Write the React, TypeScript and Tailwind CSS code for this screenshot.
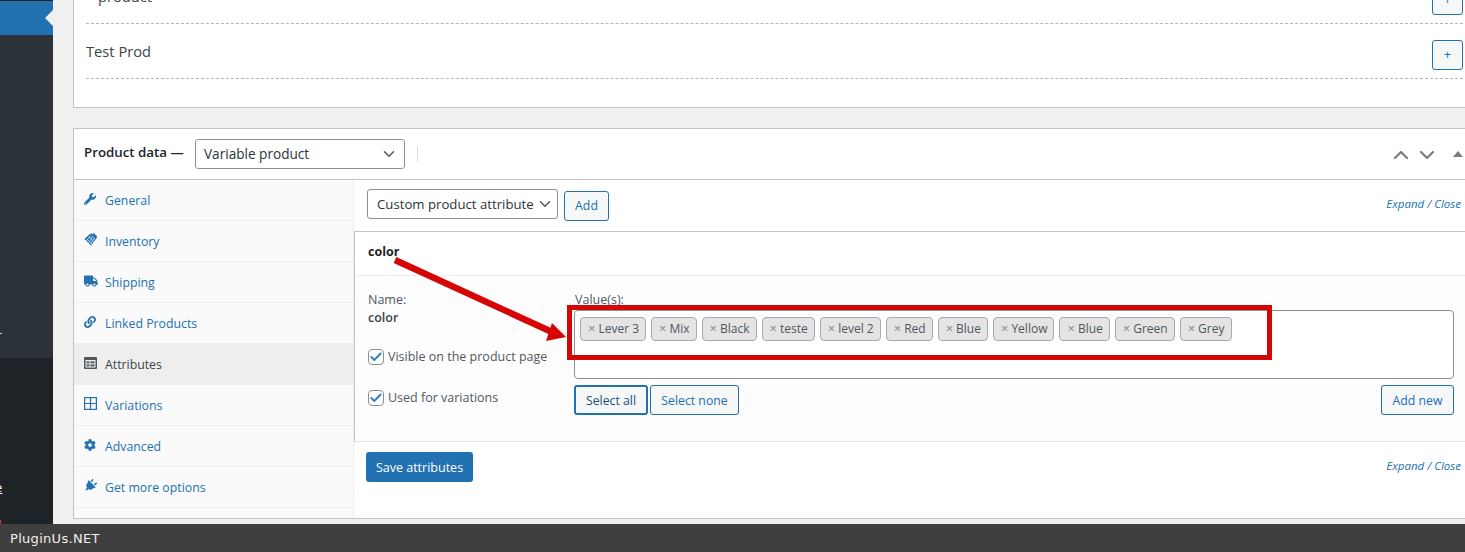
import React from "react";
import { FaWrench, FaTruck, FaLink, FaCog, FaPlug } from "react-icons/fa";
import { ChevronDown, ChevronUp, Check } from "lucide-react";

const InventoryIcon = () => (
  <svg width="14" height="14" viewBox="0 0 14 14" fill="#2271b1">
    <path d="M0.5 6 L6.5 0.5 L9 1 L9.5 0 L13 3 L12.5 5.5 L7 12.5 Z" />
    <path d="M3 6 L8 11 M5 4 L10 9 M7 2.5 L11.5 7 M6 3 L2.5 8 M8.5 4 L4.5 10 M10.5 5 L6.5 11" stroke="#fafafa" strokeWidth="0.6" fill="none" />
  </svg>
);
const AttrIcon = () => (
  <svg width="13" height="12" viewBox="0 0 13 12">
    <rect width="13" height="12" rx="1" fill="#50575e" />
    <rect x="1.5" y="3" width="10" height="7.5" fill="#eee" />
    <rect x="2.5" y="4.3" width="3" height="2" fill="#50575e" />
    <rect x="2.5" y="7.4" width="3" height="2" fill="#50575e" />
    <rect x="6.5" y="4.3" width="4" height="2" fill="#50575e" />
    <rect x="6.5" y="7.4" width="4" height="2" fill="#50575e" />
  </svg>
);
const GridIcon = () => (
  <svg width="13" height="13" viewBox="0 0 13 13" fill="none" stroke="#2271b1" strokeWidth="1.2">
    <rect x="0.6" y="0.6" width="11.8" height="11.8" />
    <path d="M6.5 0.6V12.4M0.6 6.5H12.4" />
  </svg>
);

const tabs: { label: string; icon: React.ReactNode; active?: boolean }[] = [
  { label: "General", icon: <FaWrench size={12} color="#2271b1" /> },
  { label: "Inventory", icon: <InventoryIcon /> },
  { label: "Shipping", icon: <FaTruck size={14} color="#2271b1" /> },
  { label: "Linked Products", icon: <FaLink size={12} color="#2271b1" /> },
  { label: "Attributes", icon: <AttrIcon />, active: true },
  { label: "Variations", icon: <GridIcon /> },
  { label: "Advanced", icon: <FaCog size={12} color="#2271b1" /> },
  { label: "Get more options", icon: <FaPlug size={13} color="#2271b1" className="rotate-45" /> },
];

const values = ["Lever 3", "Mix", "Black", "teste", "level 2", "Red", "Blue", "Yellow", "Blue", "Green", "Grey"];

const PlusButton = () => (
  <div className="w-[31px] h-[30px] mt-[7px] shrink-0 border border-[#2271b1] rounded-[3px] bg-[#f6f7f7] flex items-center justify-center text-[13px] text-[#2271b1]">
    +
  </div>
);

const Checkbox = () => (
  <span className="w-4 h-4 shrink-0 border border-[#8c8f94] rounded-[4px] bg-white flex items-center justify-center">
    <Check size={14} strokeWidth={3.5} color="#3582c4" />
  </span>
);

const OutlineButton = ({ children, className = "" }: { children: React.ReactNode; className?: string }) => (
  <div className={"h-[30px] pt-[2px] flex items-center justify-center rounded-[3px] bg-[#f6f7f7] text-[12.3px] " + className}>
    {children}
  </div>
);

const ExpandClose = () => (
  <span className="text-[11.5px] italic text-[#2271b1]">Expand / Close</span>
);

export default function App() {
  return (
    <div className="relative w-[1465px] h-[552px] overflow-hidden flex flex-col bg-[#f0f0f1] font-['Open_Sans','Noto_Sans',sans-serif] text-[13px] text-[#3c434a]">
      <div className="flex-1 flex min-h-0">
        {/* Admin sidebar */}
        <aside className="relative w-[53px] shrink-0 flex flex-col bg-[#2c3338]">
          <div className="relative h-[35px] bg-[#2271b1] border-t border-[#1d2327]">
            <span className="absolute right-0 top-[9px] w-0 h-0 border-y-[8px] border-y-transparent border-r-[8px] border-r-[#f0f0f1]" />
          </div>
          <div className="flex-1" />
          <div className="h-[166px] bg-[#1d2327]" />
          <span className="absolute left-0 top-[333px] w-[2px] h-px bg-[#ccc]" />
          <span className="absolute left-[-5px] top-[478px] text-[13px] text-white underline">e</span>
          <span className="absolute left-0 bottom-0 w-px h-[4px] bg-[#d63638]" />
        </aside>

        {/* Content */}
        <main className="flex-1 min-w-0 pl-5 flex flex-col">
          <section className="h-[108px] shrink-0 mr-[-1px] bg-white border-x border-b border-[#c3c4c7] overflow-hidden pl-3 pr-[2px]">
            <div className="-mt-[31px]">
              <div className="h-[55px] flex items-center justify-between border-b border-dashed border-[#b5b5b5]">
                <span className="pl-3 text-[14.7px] text-[#3c434a]">product</span>
                <PlusButton />
              </div>
              <div className="h-[55px] flex items-center justify-between border-b border-dashed border-[#b5b5b5]">
                <span className="text-[14.7px] text-[#3c434a]">Test Prod</span>
                <PlusButton />
              </div>
            </div>
          </section>

          <section className="mt-5 h-[391px] shrink-0 mr-[-1px] bg-white border-x border-y border-[#c3c4c7] flex flex-col">
            <header className="h-[51px] shrink-0 flex items-center border-b border-[#c3c4c7] pl-[10px] pr-[2px]">
              <span className="font-semibold text-[13.3px] text-[#1d2327] w-[111px] -mt-[2px] whitespace-nowrap">Product data —</span>
              <div className="w-[210px] h-[30px] flex items-center justify-between border border-[#8c8f94] rounded-[3px] pl-2 pr-[6px] text-[13.6px] text-[#2c3338]">
                <span className="pt-px">Variable product</span>
                <ChevronDown size={18} strokeWidth={2} color="#50575e" />
              </div>
              <span className="ml-3 w-px h-4 bg-[#ddd]" />
              <div className="flex-1" />
              <ChevronUp size={24} strokeWidth={2.2} color="#787c82" className="mt-px" />
              <ChevronDown size={24} strokeWidth={2.2} color="#787c82" className="ml-[2px] mt-px" />
              <span className="ml-[14px] w-0 h-0 border-x-[5px] border-x-transparent border-b-[6px] border-b-[#787c82]" />
            </header>

            <div className="flex-1 flex min-h-0">
              <nav className="w-[280px] shrink-0 bg-[#fafafa] border-r border-[#eee] flex flex-col">
                {tabs.map((t) => (
                  <div
                    key={t.label}
                    className={
                      "h-[41px] shrink-0 flex items-center pl-[10px] border-b border-[#eee] " +
                      (t.active ? "bg-[#eee] text-[#3c434a]" : "text-[#2271b1]")
                    }
                  >
                    <span className="w-[21px] flex items-center -mt-[3px]">{t.icon}</span>
                    <span className="text-[12.3px] pt-[2px]">{t.label}</span>
                  </div>
                ))}
              </nav>

              <div className="flex-1 min-w-0 flex flex-col">
                <div className="h-[52px] shrink-0 flex items-center pl-[13px] pr-[4px] border-b border-[#c3c4c7]">
                  <div className="w-[191px] h-[30px] flex items-center justify-between border border-[#8c8f94] rounded-[3px] pl-[9px] pr-[3px] -mt-[3px] text-[13.2px] text-[#2c3338] whitespace-nowrap">
                    <span className="pt-[2px]">Custom product attribute</span>
                    <ChevronDown size={18} strokeWidth={2} color="#50575e" />
                  </div>
                  <OutlineButton className="ml-[6px] w-[45px] border border-[#2271b1] text-[#2271b1]">Add</OutlineButton>
                  <div className="flex-1" />
                  <span className="-mt-[3px]"><ExpandClose /></span>
                </div>

                <div className="border-l border-[#c3c4c7] h-[210px] shrink-0 flex flex-col border-b border-b-[#e5e5e5]">
                  <div className="h-[44px] pb-[2px] shrink-0 flex items-center pl-[13px] border-b border-[#eee] font-bold text-[12.5px] text-[#1d2327]">
                    color
                  </div>
                  <div className="flex-1 flex bg-[#fdfdfd] pl-[13px] pr-[11px] pt-[15px]">
                    <div className="w-[206px] shrink-0 flex flex-col text-[12.5px] text-[#50575e]">
                      <span className="leading-[18px]">Name:</span>
                      <span className="leading-[18px] font-semibold text-[#3c434a]">color</span>
                      <label className="mt-[21px] flex items-center gap-1 whitespace-nowrap">
                        <Checkbox />
                        Visible on the product page
                      </label>
                      <label className="mt-[22px] flex items-center gap-1 whitespace-nowrap">
                        <Checkbox />
                        Used for variations
                      </label>
                    </div>
                    <div className="flex-1 min-w-0 flex flex-col">
                      <span className="leading-[18px] pl-px text-[12.5px] text-[#50575e]">Value(s):</span>
                      <div className="h-[69px] mt-px border border-[#8c8f94] rounded-[4px] bg-white pl-[5px] pt-[6px] flex gap-[5px] items-start">
                        {values.map((v, i) => (
                          <span
                            key={i}
                            className="h-[24px] flex items-center gap-[3px] pl-[7px] pr-[6px] bg-[#e4e4e4] border border-[#aaa] rounded-[4px] text-[12px] text-[#50575e] whitespace-nowrap"
                          >
                            <span className="text-[#888] text-[13px]">×</span>
                            {v}
                          </span>
                        ))}
                      </div>
                      <div className="mt-[6px] flex items-center">
                        <OutlineButton className="w-[74px] border-2 border-[#2271b1] text-[#1d4f7a]">Select all</OutlineButton>
                        <OutlineButton className="ml-[2px] w-[89px] border border-[#2271b1] text-[#2271b1]">Select none</OutlineButton>
                        <div className="flex-1" />
                        <OutlineButton className="w-[73px] border border-[#2271b1] text-[#2271b1]">Add new</OutlineButton>
                      </div>
                    </div>
                  </div>
                </div>

                <div className="h-[41px] mt-[10px] shrink-0 flex items-start pl-[12px] pr-[4px]">
                  <div className="w-[107px] h-[30px] pt-[2px] flex items-center justify-center rounded-[3px] bg-[#2271b1] text-white text-[12.5px] font-medium">
                    Save attributes
                  </div>
                  <div className="flex-1" />
                  <span className="mt-[4px]"><ExpandClose /></span>
                </div>
              </div>
            </div>
          </section>
        </main>
      </div>

      <footer className="h-[28px] shrink-0 bg-[#3f3f3f] flex items-center pl-[10px] pt-px font-['DejaVu_Sans',sans-serif] text-[13px] tracking-[0.3px] text-[#eee]">
        PluginUs.NET
      </footer>

      {/* Screenshot annotations laid over the page */}
      <div className="absolute left-[567px] top-[305px] w-[705px] h-[55px] border-[5px] border-[#d60606]" />
      <svg className="absolute left-0 top-0 pointer-events-none" width="1465" height="552">
        <path d="M395 260 L552 332" stroke="#d60606" strokeWidth="6.5" fill="none" />
        <path d="M566 337 L546 341 L552 323 Z" fill="#d60606" />
      </svg>
    </div>
  );
}
